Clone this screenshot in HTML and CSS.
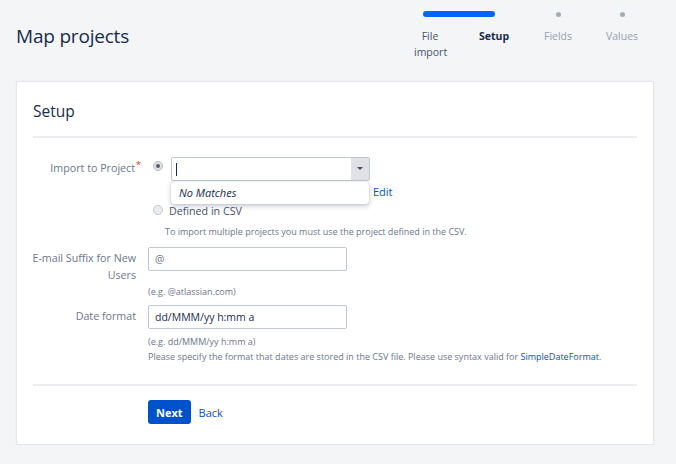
FILE: index.html
```html
<!DOCTYPE html>
<html lang="en">

<head>
    <meta charset="UTF-8">
    <title>Map projects</title>
    <link rel="stylesheet" href="styles.css">
</head>

<body>
    <div class="page">
        <div class="page-header">
            <h1 class="page-title">Map projects</h1>
            <div class="tracker">
                <div class="tracker-bar"></div>
                <div class="tracker-dot tracker-dot-3"></div>
                <div class="tracker-dot tracker-dot-4"></div>
                <div class="tracker-label done">File import</div>
                <div class="tracker-label current">Setup</div>
                <div class="tracker-label">Fields</div>
                <div class="tracker-label">Values</div>
            </div>
        </div>

        <div class="card">
            <h2 class="card-title">Setup</h2>
            <hr class="divider">

            <div class="form">
                <div class="form-row">
                    <label class="form-label">Import to Project<span class="required">*</span></label>
                    <div class="form-field">
                        <div class="radio-line">
                            <span class="radio checked"></span>
                            <div class="select-wrap">
                                <div class="select">
                                    <span class="caret-line"></span>
                                    <span class="select-arrow"></span>
                                </div>
                                <div class="dropdown">No Matches</div>
                            </div>
                        </div>
                        <div class="edit-line"><a class="link" href="#">Edit</a></div>
                        <div class="radio-line csv-line">
                            <span class="radio"></span>
                            <span class="radio-text">Defined in CSV</span>
                        </div>
                        <div class="hint hint-csv">To import multiple projects you must use the project defined in the CSV.</div>
                    </div>
                </div>

                <div class="form-row row-email">
                    <label class="form-label">E-mail Suffix for New Users</label>
                    <div class="form-field">
                        <div class="text-input muted">@</div>
                        <div class="hint hint-email">(e.g. @atlassian.com)</div>
                    </div>
                </div>

                <div class="form-row row-date">
                    <label class="form-label">Date format</label>
                    <div class="form-field">
                        <div class="text-input">dd/MMM/yy h:mm a</div>
                        <div class="hint hint-date">(e.g. dd/MMM/yy h:mm a)</div>
                        <div class="hint">Please specify the format that dates are stored in the CSV file. Please use syntax valid for <a class="link" href="#">SimpleDateFormat</a>.</div>
                    </div>
                </div>
            </div>

            <hr class="divider divider-bottom">

            <div class="buttons">
                <button class="button-primary">Next</button>
                <a class="link back-link" href="#">Back</a>
            </div>
        </div>
    </div>
</body>

</html>
```

FILE: styles.css
```css
body {
    margin: 0;
    padding: 0;
    background-color: #f4f5f7;
    font-family: "Open Sans", Arial, sans-serif;
    color: #172b4d;
}

.page {
    padding: 11px 22px 0 16px;
}

.page-header {
    display: flex;
    justify-content: space-between;
    align-items: flex-start;
    height: 70px;
}

.page-title {
    margin: 12px 0 0 0;
    font-size: 19px;
    font-weight: 400;
    color: #172b4d;
    letter-spacing: -0.2px;
}

/* progress tracker */
.tracker {
    display: grid;
    grid-template-columns: repeat(4, 64px);
    grid-template-rows: 6px auto;
    row-gap: 11px;
}

.tracker-bar {
    grid-column: 1 / 3;
    grid-row: 1;
    margin: 0 31px 0 25px;
    height: 6px;
    border-radius: 3px;
    background-color: #0065ff;
}

.tracker-dot {
    grid-row: 1;
    justify-self: center;
    align-self: center;
    width: 5px;
    height: 5px;
    border-radius: 50%;
    background-color: #a5adba;
}

.tracker-dot-3 {
    grid-column: 3;
}

.tracker-dot-4 {
    grid-column: 4;
}

.tracker-label {
    grid-row: 2;
    text-align: center;
    font-size: 10.5px;
    line-height: 16px;
    color: #97a0af;
    padding: 0 16px;
}

.tracker-label.done {
    color: #42526e;
}

.tracker-label.current {
    color: #172b4d;
    font-weight: 700;
    padding: 0;
}

/* card */
.card {
    background-color: #ffffff;
    border: 1px solid #e4e6ea;
    border-radius: 2px;
    box-shadow: 0 0 1px rgba(9, 30, 66, 0.15);
    padding: 16px 16px 20px 16px;
}

.card-title {
    margin: 0;
    font-size: 15.5px;
    font-weight: 400;
    line-height: 26px;
    color: #172b4d;
}

.divider {
    border: none;
    border-top: 2px solid #ebecf0;
    margin: 12px 0 19px 0;
}

.divider-bottom {
    margin: 20px 0 14px 0;
}

.form-row {
    display: grid;
    grid-template-columns: 103px 1fr;
    column-gap: 12px;
}

.form-label {
    text-align: right;
    font-size: 10.7px;
    line-height: 17px;
    color: #6b778c;
    padding-top: 3px;
    margin-left: -10px;
}

.required {
    color: #de350b;
    font-size: 9px;
    vertical-align: top;
    line-height: 10px;
    margin-left: 1px;
    margin-right: -5px;
}

.form-field {
    font-size: 10.5px;
    color: #6b778c;
}

.radio-line {
    display: flex;
    align-items: flex-start;
}

.radio {
    flex: none;
    width: 8px;
    height: 8px;
    border: 1px solid #c1c7d0;
    border-radius: 50%;
    background-color: #ebecf0;
    margin: 4px 8px 0 5px;
    position: relative;
}

.radio.checked {
    background-color: #dfe1e6;
    border-color: #b3bac5;
}

.radio.checked::after {
    content: "";
    position: absolute;
    left: 2px;
    top: 2px;
    width: 4px;
    height: 4px;
    border-radius: 50%;
    background-color: #505f79;
}

.select-wrap {
    position: relative;
}

.select {
    width: 197px;
    height: 22px;
    border: 1px solid #c1c7d0;
    border-radius: 2px;
    display: flex;
    align-items: center;
    justify-content: space-between;
    background-color: #ffffff;
}

.caret-line {
    width: 1px;
    height: 13px;
    background-color: #172b4d;
    margin-left: 4px;
}

.select-arrow {
    width: 18px;
    height: 22px;
    background-color: #dfe1e6;
    position: relative;
}

.select-arrow::after {
    content: "";
    position: absolute;
    left: 6px;
    top: 9px;
    border-left: 3px solid transparent;
    border-right: 3px solid transparent;
    border-top: 3px solid #42526e;
}

.dropdown {
    position: absolute;
    left: 0;
    top: 25px;
    width: 190px;
    height: 22px;
    padding-left: 8px;
    line-height: 22px;
    font-style: italic;
    font-size: 11px;
    color: #172b4d;
    background-color: #ffffff;
    border-radius: 3px;
    box-shadow: 0 2px 5px rgba(9, 30, 66, 0.25), 0 0 1px rgba(9, 30, 66, 0.3);
}

.edit-line {
    padding-left: 225px;
    line-height: 18px;
    margin-top: 2px;
    font-size: 11px;
}

.csv-line {
    margin-top: 1px;
}

.csv-line .radio {
    margin-top: 3px;
}

.radio-text {
    font-size: 10.7px;
    line-height: 18px;
    color: #42526e;
    margin-left: -2px;
}

.hint {
    font-size: 9px;
    line-height: 15px;
    color: #6b778c;
}

.hint-csv {
    margin: 4px 0 0 17px;
}

.row-email {
    margin-top: 8px;
}

.hint-email {
    margin-top: 13px;
}

.row-date {
    margin-top: 6px;
}

.hint-date {
    margin-top: 5px;
}

.text-input {
    width: 191px;
    height: 22px;
    line-height: 22px;
    padding-left: 6px;
    border: 1px solid #c1c7d0;
    border-radius: 2px;
    font-size: 10.5px;
    color: #172b4d;
}

.text-input.muted {
    color: #6b778c;
}

.link {
    color: #0052cc;
    text-decoration: none;
}

.buttons {
    display: flex;
    align-items: center;
    gap: 8px;
    padding-left: 115px;
}

.button-primary {
    font-family: "Open Sans", Arial, sans-serif;
    font-size: 11px;
    font-weight: 700;
    color: #ffffff;
    background-color: #0052cc;
    border: none;
    border-radius: 3px;
    height: 24px;
    padding: 0 8px;
}

.back-link {
    font-size: 11px;
}
```
